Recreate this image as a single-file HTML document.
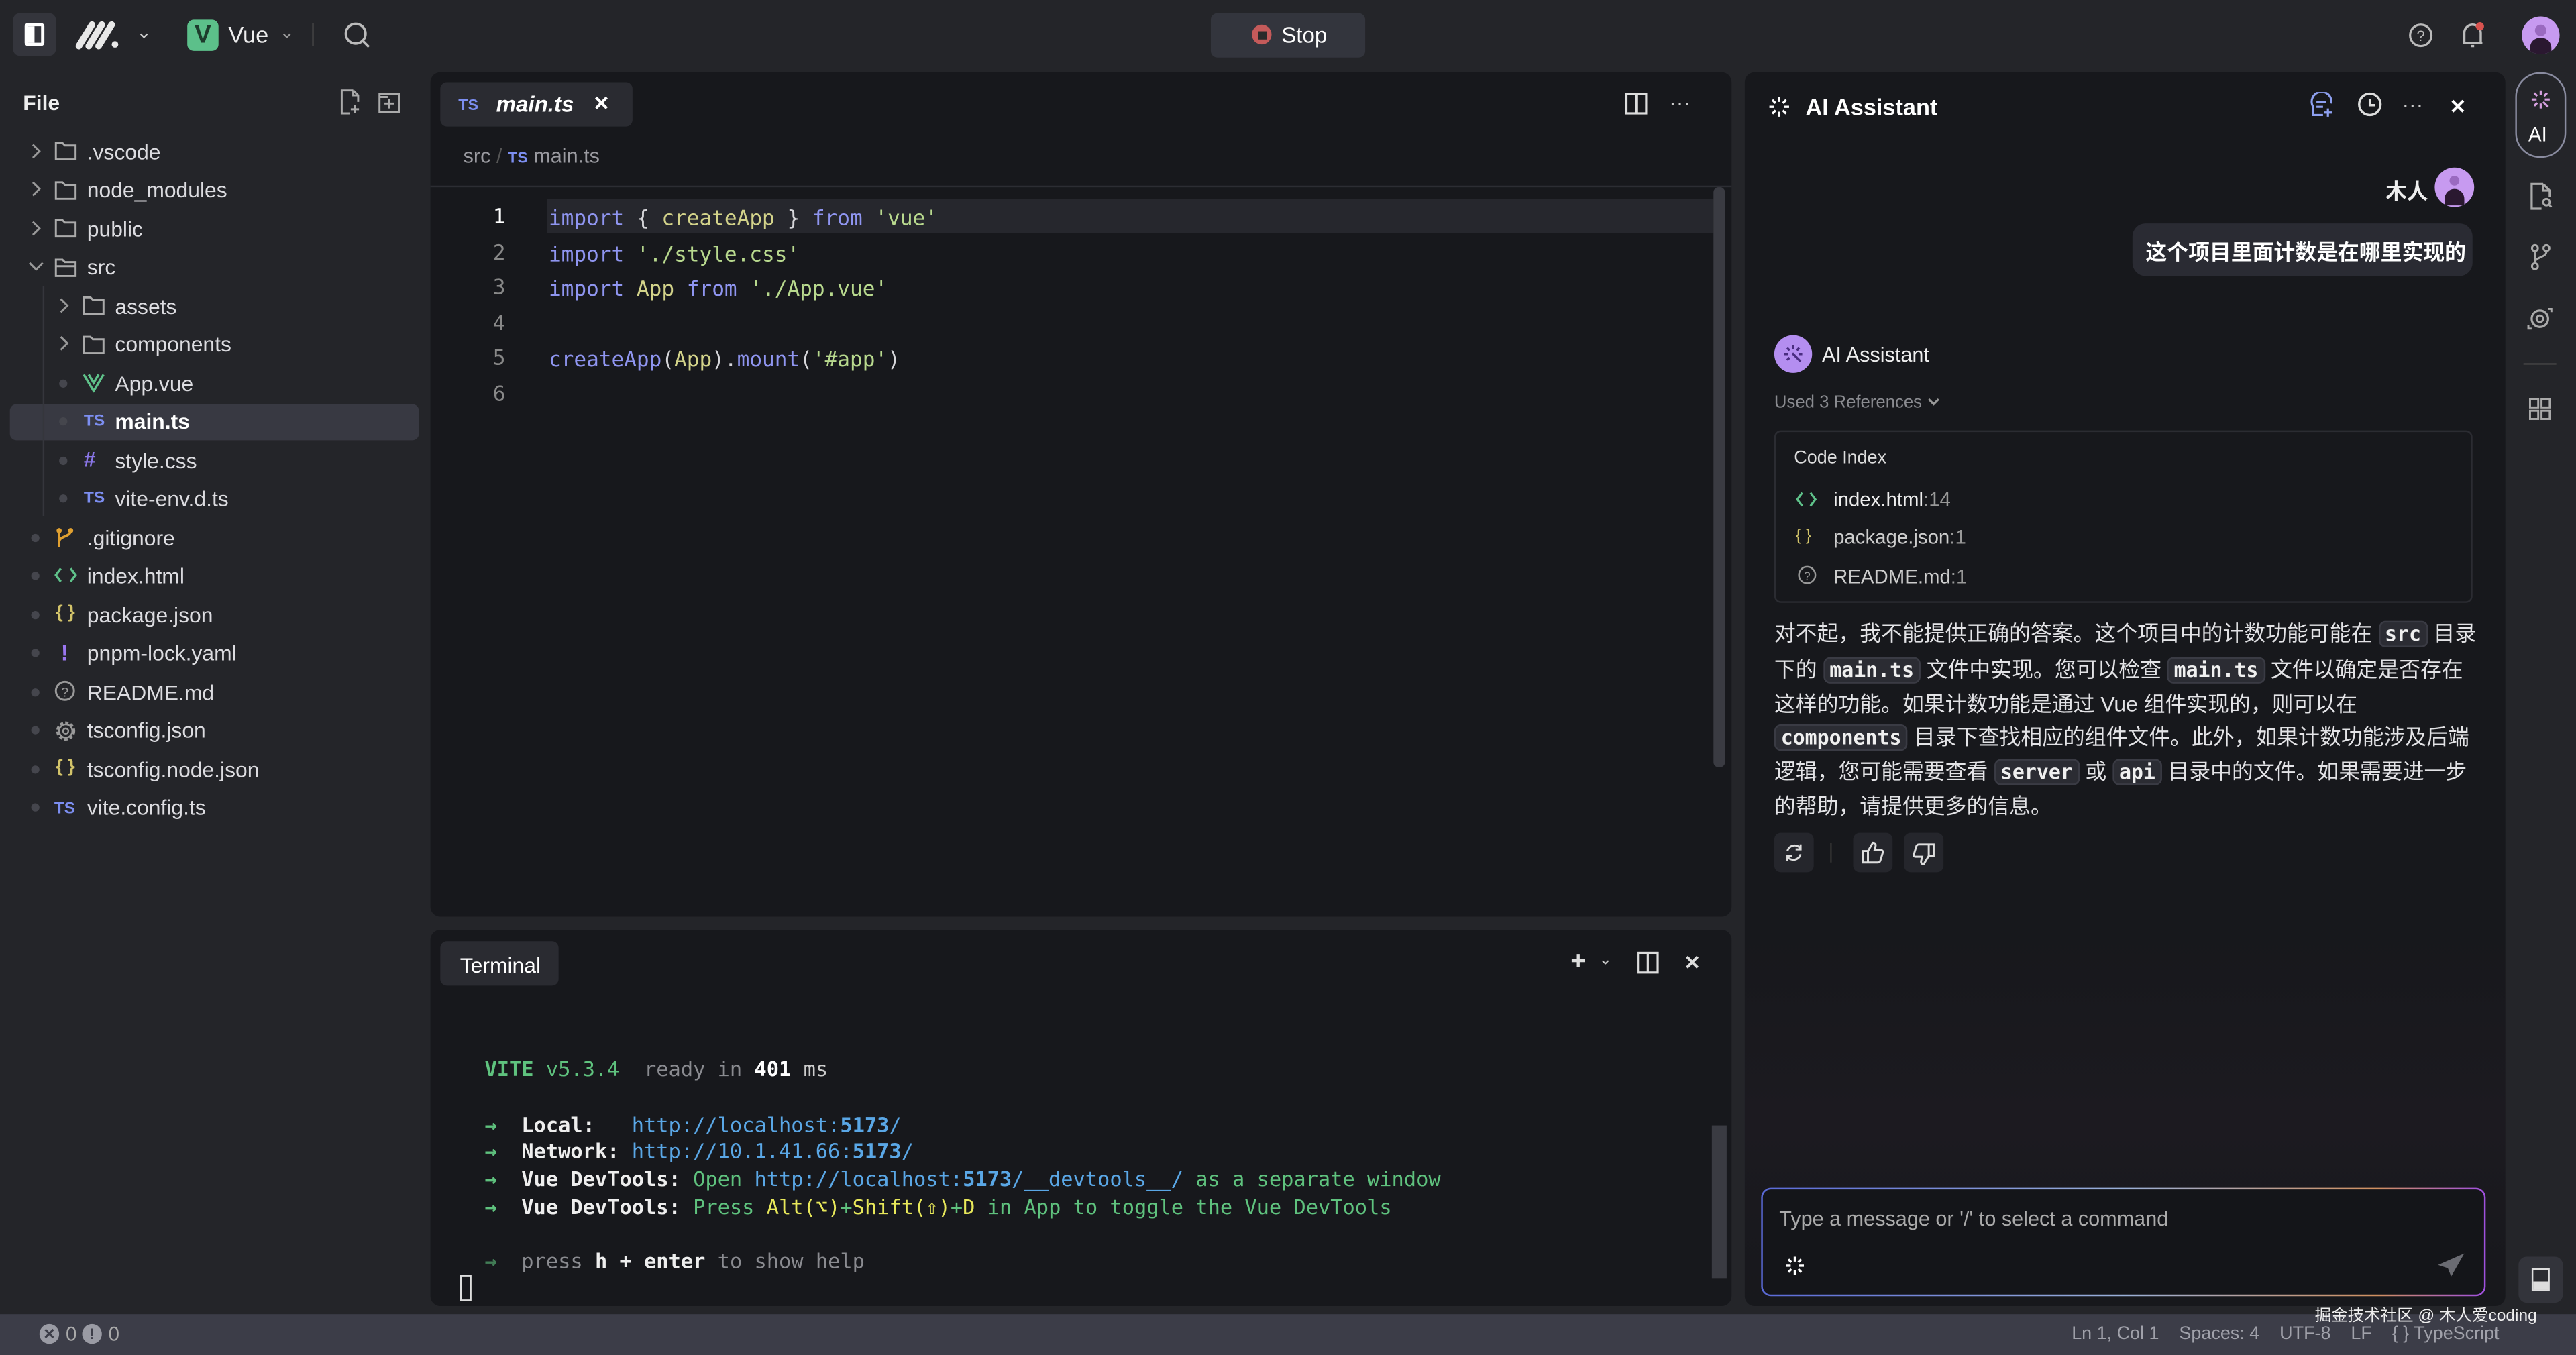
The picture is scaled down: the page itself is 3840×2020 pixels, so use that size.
<!DOCTYPE html>
<html><head><meta charset="utf-8"><style>
*{box-sizing:border-box;margin:0;padding:0}
html,body{width:3840px;height:2019px;overflow:hidden;background:#242529}
#w{position:absolute;left:0;top:0;width:1568px;height:825px;transform:scale(2.449);transform-origin:0 0;background:#242529;font-family:"Liberation Sans","Noto Sans CJK SC",sans-serif;color:#e6e6e8}
.a{position:absolute;white-space:nowrap}
.m{font-family:"DejaVu Sans Mono","Liberation Mono",monospace}
.panel{position:absolute;background:#17181c;border-radius:6px}
.tr{position:absolute;font-size:13px;color:#dcdce0;line-height:16px}
.ic{position:absolute;font-size:10px;font-weight:bold}
.dot{position:absolute;width:5px;height:5px;border-radius:50%;background:#45464d}
.code{font-size:12.7px;line-height:16px}
.kw{color:#8f95f0}.fn{color:#d3d38a}.st{color:#b8d98e}.pl{color:#d6d6da}
.tl{font-size:12.4px;line-height:16px;white-space:pre}
.g{color:#5fc27e}.b{color:#5aa7e6}.y{color:#e8e85a}.gr{color:#8a8b90}
.cc{font-family:"DejaVu Sans Mono",monospace;font-weight:bold;font-size:12.2px;background:#2b2c33;border:1px solid #3a3b44;border-radius:4px;padding:0 3px;color:#f0f0f0}
.zh{font-size:13px;color:#e3e3e6;line-height:18px}
svg{position:absolute}
</style></head><body><div id="w">

<div class="a" style="left:8px;top:8px;width:26px;height:26px;background:#34353c;border-radius:4px"></div>
<div class="a" style="left:15px;top:14px;width:12px;height:14px;border:2px solid #fff;border-radius:2px"><div style="width:4px;height:10px;background:#fff"></div></div>
<svg style="left:46px;top:12px" width="30" height="18" viewBox="0 0 30 18"><path d="M2 16 L10 3 M8 16 L16 3 M14 16 L22 3" stroke="#e8e8e8" stroke-width="4" stroke-linecap="round"/><circle cx="24" cy="15" r="2" fill="#e8e8e8"/></svg>
<div class="a" style="left:83px;top:13px;font-size:11px;color:#ccc">⌄</div>
<div class="a" style="left:114px;top:12px;width:19px;height:19px;background:#5cc08a;border-radius:4px;color:#1d3b2c;font-weight:bold;font-size:15px;text-align:center;line-height:19px">V</div>
<div class="a" style="left:139px;top:13px;font-size:14px;color:#eee">Vue</div>
<div class="a" style="left:170px;top:13px;font-size:11px;color:#999">⌄</div>
<div class="a" style="left:190px;top:14px;width:1px;height:14px;background:#444"></div>
<svg style="left:209px;top:13px" width="17" height="17" viewBox="0 0 17 17"><circle cx="7.5" cy="7.5" r="6" stroke="#bbb" stroke-width="1.5" fill="none"/><path d="M12 12l3.5 3.5" stroke="#bbb" stroke-width="1.5"/></svg>
<div class="a" style="left:737px;top:8px;width:94px;height:27px;background:#33353d;border-radius:4px"></div>
<div class="a" style="left:762px;top:15px;width:12px;height:12px;border-radius:50%;background:#c45a5a"><div style="margin:3.5px;width:5px;height:5px;background:#2a2a2a"></div></div>
<div class="a" style="left:780px;top:14px;font-size:13.5px;color:#fff">Stop</div>
<svg style="left:1466px;top:14px" width="15" height="15" viewBox="0 0 15 15"><circle cx="7.5" cy="7.5" r="6.5" stroke="#bbb" stroke-width="1.3" fill="none"/><text x="7.5" y="11" font-size="9" fill="#bbb" text-anchor="middle" font-family="Liberation Sans">?</text></svg>
<svg style="left:1497px;top:13px" width="16" height="17" viewBox="0 0 16 17"><path d="M3 13V7a5 5 0 0110 0v6zM2 13h12M7 15h2" stroke="#bbb" stroke-width="1.4" fill="none"/><circle cx="12.5" cy="3" r="2.5" fill="#d9534f"/></svg>
<div class="a" style="left:1535px;top:10px;width:23px;height:23px;border-radius:50%;background:#c79af0;overflow:hidden"><div style="position:absolute;left:8px;top:5px;width:7px;height:7px;border-radius:50%;background:#9a6ac0"></div><div style="position:absolute;left:5px;top:13px;width:13px;height:12px;border-radius:6px 6px 0 0;background:#2a1830"></div></div>

<div class="a" style="left:14px;top:55px;font-size:13px;font-weight:bold;color:#eee">File</div>
<svg style="left:206px;top:54px" width="14" height="16" viewBox="0 0 14 16"><path d="M9 1H2v14h5M9 1l3 3v4M9 1v3h3M10 10v5M7.5 12.5h5" stroke="#aaa" stroke-width="1.2" fill="none"/></svg>
<svg style="left:230px;top:55px" width="14" height="14" viewBox="0 0 14 14"><rect x="1" y="2" width="12" height="11" stroke="#aaa" stroke-width="1.2" fill="none"/><path d="M7 5v6M4 8h6M1 4h5" stroke="#aaa" stroke-width="1.2"/></svg>
<div class="a" style="left:6px;top:246px;width:249px;height:22px;background:#383942;border-radius:4px"></div>
<div class="a" style="left:26px;top:174px;width:1px;height:140px;background:#35363c"></div>

<svg style="left:18px;top:87px" width="8" height="10"><path d="M2 1l4 4-4 4" stroke="#999" stroke-width="1.2" fill="none"/></svg>
<svg style="left:18px;top:110px" width="8" height="10"><path d="M2 1l4 4-4 4" stroke="#999" stroke-width="1.2" fill="none"/></svg>
<svg style="left:18px;top:134px" width="8" height="10"><path d="M2 1l4 4-4 4" stroke="#999" stroke-width="1.2" fill="none"/></svg>
<svg style="left:17px;top:158px" width="10" height="8"><path d="M1 2l4 4 4-4" stroke="#999" stroke-width="1.2" fill="none"/></svg>
<svg style="left:35px;top:181px" width="8" height="10"><path d="M2 1l4 4-4 4" stroke="#999" stroke-width="1.2" fill="none"/></svg>
<svg style="left:35px;top:204px" width="8" height="10"><path d="M2 1l4 4-4 4" stroke="#999" stroke-width="1.2" fill="none"/></svg>
<svg style="left:33px;top:85px" width="14" height="13"><path d="M1 2h4l1.5 1.5H13V12H1z" stroke="#aaa" stroke-width="1.2" fill="none"/></svg>
<svg style="left:33px;top:109px" width="14" height="13"><path d="M1 2h4l1.5 1.5H13V12H1z" stroke="#aaa" stroke-width="1.2" fill="none"/></svg>
<svg style="left:33px;top:132px" width="14" height="13"><path d="M1 2h4l1.5 1.5H13V12H1z" stroke="#aaa" stroke-width="1.2" fill="none"/></svg>
<svg style="left:33px;top:156px" width="14" height="13"><path d="M1 2h4l1.5 1.5H13V12H1zM1 6h12" stroke="#aaa" stroke-width="1.2" fill="none"/></svg>
<svg style="left:50px;top:179px" width="14" height="13"><path d="M1 2h4l1.5 1.5H13V12H1z" stroke="#aaa" stroke-width="1.2" fill="none"/></svg>
<svg style="left:50px;top:203px" width="14" height="13"><path d="M1 2h4l1.5 1.5H13V12H1z" stroke="#aaa" stroke-width="1.2" fill="none"/></svg>
<div class="tr" style="left:53px;top:85px">.vscode</div>
<div class="tr" style="left:53px;top:108px">node_modules</div>
<div class="tr" style="left:53px;top:132px">public</div>
<div class="tr" style="left:53px;top:155px">src</div>
<div class="tr" style="left:70px;top:179px">assets</div>
<div class="tr" style="left:70px;top:202px">components</div>
<div class="dot" style="left:36px;top:231px"></div><svg style="left:50px;top:227px" width="14" height="12"><path d="M1 1l6 10 6-10M4 1l3 5 3-5" stroke="#5fc28a" stroke-width="1.4" fill="none"/></svg><div class="tr" style="left:70px;top:226px">App.vue</div>
<div class="dot" style="left:36px;top:254px"></div><div class="ic" style="left:51px;top:251px;color:#7c8ef0">TS</div><div class="tr" style="left:70px;top:249px;color:#fff;font-weight:bold">main.ts</div>
<div class="dot" style="left:36px;top:278px"></div><div class="ic" style="left:51px;top:272px;color:#8a76e8;font-size:13px">#</div><div class="tr" style="left:70px;top:273px">style.css</div>
<div class="dot" style="left:36px;top:301px"></div><div class="ic" style="left:51px;top:298px;color:#7c8ef0">TS</div><div class="tr" style="left:70px;top:296px">vite-env.d.ts</div>
<div class="dot" style="left:19px;top:325px"></div><svg style="left:33px;top:320px" width="12" height="14"><circle cx="3" cy="3" r="1.6" fill="#e0a030"/><circle cx="10" cy="3" r="1.6" fill="#e0a030"/><path d="M3 3v10M10 3c0 4-7 3-7 7" stroke="#e0a030" stroke-width="1.5" fill="none"/></svg><div class="tr" style="left:53px;top:320px">.gitignore</div>
<div class="dot" style="left:19px;top:348px"></div><svg style="left:33px;top:345px" width="14" height="10"><path d="M4 1L1 5l3 4M10 1l3 4-3 4" stroke="#5fc28a" stroke-width="1.4" fill="none"/></svg><div class="tr" style="left:53px;top:343px">index.html</div>
<div class="dot" style="left:19px;top:372px"></div><div class="ic" style="left:34px;top:367px;color:#d3c46a;font-size:11px">{ }</div><div class="tr" style="left:53px;top:367px">package.json</div>
<div class="dot" style="left:19px;top:395px"></div><div class="ic" style="left:37px;top:389px;color:#9a76f0;font-size:14px">!</div><div class="tr" style="left:53px;top:390px">pnpm-lock.yaml</div>
<div class="dot" style="left:19px;top:419px"></div><svg style="left:33px;top:414px" width="13" height="13"><circle cx="6.5" cy="6.5" r="5.5" stroke="#999" stroke-width="1.2" fill="none"/><text x="6.5" y="10" font-size="8" fill="#999" text-anchor="middle" font-family="Liberation Sans">?</text></svg><div class="tr" style="left:53px;top:414px">README.md</div>
<div class="dot" style="left:19px;top:442px"></div><svg style="left:33px;top:438px" width="14" height="14"><circle cx="7" cy="7" r="5" stroke="#999" stroke-width="1.6" stroke-dasharray="2 1.3" fill="none"/><circle cx="7" cy="7" r="4" stroke="#999" stroke-width="1" fill="none"/><circle cx="7" cy="7" r="1.6" stroke="#999" stroke-width="1" fill="none"/></svg><div class="tr" style="left:53px;top:437px">tsconfig.json</div>
<div class="dot" style="left:19px;top:466px"></div><div class="ic" style="left:34px;top:461px;color:#d3c46a;font-size:11px">{ }</div><div class="tr" style="left:53px;top:461px">tsconfig.node.json</div>
<div class="dot" style="left:19px;top:489px"></div><div class="ic" style="left:33px;top:487px;color:#7c8ef0">TS</div><div class="tr" style="left:53px;top:484px">vite.config.ts</div>

<div class="panel" style="left:262px;top:44px;width:792px;height:514px"></div>
<div class="a" style="left:268px;top:50px;width:117px;height:27px;background:#2a2b31;border-radius:4px"></div>
<div class="a" style="left:279px;top:59px;font-size:9.5px;font-weight:bold;color:#7c8ef0">TS</div>
<div class="a" style="left:302px;top:56px;font-size:13.5px;font-style:italic;font-weight:bold;color:#fff">main.ts</div>
<div class="a" style="left:361px;top:56px;font-size:12px;font-weight:bold;color:#fff">✕</div>
<svg style="left:989px;top:56px" width="14" height="14"><rect x="1" y="1" width="12" height="12" stroke="#ddd" stroke-width="1.3" fill="none"/><path d="M7 1v12" stroke="#ddd" stroke-width="1.3"/></svg>
<div class="a" style="left:1016px;top:55px;font-size:13px;color:#ccc">···</div>
<div class="a" style="left:282px;top:88px;font-size:12.5px;color:#9a9aa0">src <span style="color:#555">/</span> <span style="color:#7c8ef0;font-size:9.5px;font-weight:bold">TS</span> main.ts</div>
<div class="a" style="left:262px;top:113px;width:792px;height:1px;background:#2c2d33"></div>
<div class="a" style="left:333px;top:121px;width:710px;height:21px;background:#26272d"></div>
<div class="a" style="left:1043px;top:114px;width:7px;height:353px;background:#3a3b42;border-radius:3px"></div>
<div class="a m code" style="left:300px;top:124px;color:#fff">1</div>
<div class="a m code" style="left:300px;top:146px;color:#888">2</div>
<div class="a m code" style="left:300px;top:167px;color:#888">3</div>
<div class="a m code" style="left:300px;top:189px;color:#888">4</div>
<div class="a m code" style="left:300px;top:210px;color:#888">5</div>
<div class="a m code" style="left:300px;top:232px;color:#888">6</div>
<div class="a m code" style="left:334px;top:125px"><span class="kw">import</span> <span class="pl">{</span> <span class="fn">createApp</span> <span class="pl">}</span> <span class="kw">from</span> <span class="st">'vue'</span></div>
<div class="a m code" style="left:334px;top:147px"><span class="kw">import</span> <span class="st">'./style.css'</span></div>
<div class="a m code" style="left:334px;top:168px"><span class="kw">import</span> <span class="fn">App</span> <span class="kw">from</span> <span class="st">'./App.vue'</span></div>
<div class="a m code" style="left:334px;top:211px"><span class="kw">createApp</span><span class="pl">(</span><span class="fn">App</span><span class="pl">).</span><span class="kw">mount</span><span class="pl">(</span><span class="st">'#app'</span><span class="pl">)</span></div>

<div class="panel" style="left:262px;top:566px;width:792px;height:229px"></div>
<div class="a" style="left:268px;top:573px;width:72px;height:27px;background:#2a2b31;border-radius:4px"></div>
<div class="a" style="left:280px;top:580px;font-size:13px;color:#fff">Terminal</div>
<div class="a" style="left:956px;top:577px;font-size:16px;font-weight:bold;color:#ddd">+</div>
<div class="a" style="left:973px;top:579px;font-size:10px;color:#ccc">⌄</div>
<svg style="left:996px;top:579px" width="14" height="14"><rect x="1" y="1" width="12" height="12" stroke="#ddd" stroke-width="1.3" fill="none"/><path d="M7 1v12" stroke="#ddd" stroke-width="1.3"/></svg>
<div class="a" style="left:1025px;top:579px;font-size:12px;font-weight:bold;color:#ddd">✕</div>
<div class="a" style="left:1042px;top:685px;width:9px;height:93px;background:#3a3b42"></div>
<div class="a m tl" style="left:295px;top:643px"><b class="g">VITE</b> <span class="g">v5.3.4</span>  <span class="gr">ready in</span> <b style="color:#fff">401</b> <span style="color:#ccc">ms</span></div>
<div class="a m tl" style="left:295px;top:677px"><b class="g">→</b>  <b style="color:#eee">Local:</b>   <span class="b">http://localhost:<b>5173</b>/</span></div>
<div class="a m tl" style="left:295px;top:693px"><b class="g">→</b>  <b style="color:#eee">Network:</b> <span class="b">http://10.1.41.66:<b>5173</b>/</span></div>
<div class="a m tl" style="left:295px;top:710px"><b class="g">→</b>  <b style="color:#eee">Vue DevTools:</b> <span class="g">Open</span> <span class="b">http://localhost:<b>5173</b>/__devtools__/</span> <span class="g">as a separate window</span></div>
<div class="a m tl" style="left:295px;top:727px"><b class="g">→</b>  <b style="color:#eee">Vue DevTools:</b> <span class="g">Press</span> <span class="y">Alt(⌥)</span><span class="g">+</span><span class="y">Shift(⇧)</span><span class="g">+</span><span class="y">D</span> <span class="g">in App to toggle the Vue DevTools</span></div>
<div class="a m tl" style="left:295px;top:760px"><b class="g" style="opacity:.6">→</b>  <span class="gr">press</span> <b style="color:#eee">h + enter</b> <span class="gr">to show help</span></div>
<div class="a" style="left:280px;top:776px;width:7px;height:16px;border:1px solid #ddd"></div>

<div class="panel" style="left:1062px;top:44px;width:463px;height:751px;background:linear-gradient(#17181c 70%,#1c1a20 85%,#17181c)"></div>
<svg style="left:1076px;top:58px" width="14" height="14"><path d="M7 1v3M7 10v3M1 7h3M10 7h3M2.8 2.8l2 2M9.2 9.2l2 2M11.2 2.8l-2 2M2.8 11.2l2-2" stroke="#fff" stroke-width="1.4"/></svg>
<div class="a" style="left:1099px;top:57px;font-size:14px;font-weight:bold;color:#fff">AI Assistant</div>
<svg style="left:1406px;top:56px" width="16" height="16"><path d="M13 7A6 6 0 102 9v5h6M4 6h6M4 9h4M11 10v5M8.5 12.5h5" stroke="#8ea0f0" stroke-width="1.3" fill="none"/></svg>
<svg style="left:1434px;top:55px" width="17" height="17"><circle cx="8.5" cy="8.5" r="6.5" stroke="#ddd" stroke-width="1.4" fill="none"/><path d="M8.5 5v4h3" stroke="#ddd" stroke-width="1.4" fill="none"/></svg>
<div class="a" style="left:1462px;top:56px;font-size:13px;color:#ccc">···</div>
<div class="a" style="left:1491px;top:58px;font-size:12px;font-weight:bold;color:#fff">✕</div>
<div class="a" style="left:1452px;top:106px;font-size:13px;font-weight:bold;color:#eee">木人</div>
<div class="a" style="left:1482px;top:102px;width:24px;height:24px;border-radius:50%;background:#c79af0;overflow:hidden"><div style="position:absolute;left:9px;top:5px;width:6px;height:6px;border-radius:50%;background:#9a6ac0"></div><div style="position:absolute;left:6px;top:13px;width:12px;height:10px;border-radius:6px 6px 0 0;background:#2a1830"></div></div>
<div class="a" style="left:1298px;top:136px;width:207px;height:32px;background:#2a2b33;border-radius:8px"></div>
<div class="a" style="left:1306px;top:143px;font-size:13px;font-weight:bold;color:#fff">这个项目里面计数是在哪里实现的</div>
<div class="a" style="left:1080px;top:204px;width:23px;height:23px;border-radius:50%;background:#b48ef0"></div>
<svg style="left:1085px;top:209px" width="13" height="13"><path d="M6.5 1v2.5M1 6.5h2.5M10 6.5h2M2.8 2.8l1.5 1.5M10.2 2.8l-1.5 1.5M2.8 10.2l1.5-1.5M6 6l5 5" stroke="#4a2d80" stroke-width="1.4"/></svg>
<div class="a" style="left:1109px;top:209px;font-size:12.5px;color:#eee">AI Assistant</div>
<div class="a" style="left:1080px;top:239px;font-size:10.5px;color:#8a8b90">Used 3 References</div>
<svg style="left:1173px;top:242px" width="8" height="6"><path d="M1 1l3 3 3-3" stroke="#999" stroke-width="1.3" fill="none"/></svg>
<div class="a" style="left:1080px;top:262px;width:425px;height:105px;border:1px solid #2b2c32;border-radius:4px"></div>
<div class="a" style="left:1092px;top:273px;font-size:11px;color:#ddd">Code Index</div>
<svg style="left:1093px;top:299px" width="13" height="10"><path d="M4 1L1 5l3 4M9 1l3 4-3 4" stroke="#5fc28a" stroke-width="1.3" fill="none"/></svg><div class="a" style="left:1116px;top:297px;font-size:12px;color:#eee">index.html<span style="color:#999">:14</span></div>
<div class="a" style="left:1093px;top:321px;font-size:10px;color:#d3c46a">{ }</div><div class="a" style="left:1116px;top:320px;font-size:12px;color:#ccc">package.json<span style="color:#999">:1</span></div>
<svg style="left:1094px;top:344px" width="12" height="12"><circle cx="6" cy="6" r="5" stroke="#999" stroke-width="1" fill="none"/><text x="6" y="9" font-size="7" fill="#999" text-anchor="middle" font-family="Liberation Sans">?</text></svg><div class="a" style="left:1116px;top:344px;font-size:12px;color:#ccc">README.md<span style="color:#999">:1</span></div>

<div class="a zh" style="left:1080px;top:377px">对不起，我不能提供正确的答案。这个项目中的计数功能可能在 <span class="cc">src</span> 目录</div>
<div class="a zh" style="left:1080px;top:399px">下的 <span class="cc">main.ts</span> 文件中实现。您可以检查 <span class="cc">main.ts</span> 文件以确定是否存在</div>
<div class="a zh" style="left:1080px;top:420px">这样的功能。如果计数功能是通过 Vue 组件实现的，则可以在</div>
<div class="a zh" style="left:1080px;top:440px"><span class="cc">components</span> 目录下查找相应的组件文件。此外，如果计数功能涉及后端</div>
<div class="a zh" style="left:1080px;top:461px">逻辑，您可能需要查看 <span class="cc">server</span> 或 <span class="cc">api</span> 目录中的文件。如果需要进一步</div>
<div class="a zh" style="left:1080px;top:482px">的帮助，请提供更多的信息。</div>
<div class="a" style="left:1080px;top:507px;width:24px;height:24px;background:#25262c;border-radius:4px"></div>
<svg style="left:1086px;top:513px" width="12" height="12"><path d="M2 5a4.5 4.5 0 018-1.5M10 7a4.5 4.5 0 01-8 1.5M10 1v3H7M2 11V8h3" stroke="#ddd" stroke-width="1.2" fill="none"/></svg>
<div class="a" style="left:1114px;top:513px;width:1px;height:12px;background:#333"></div>
<div class="a" style="left:1128px;top:507px;width:24px;height:24px;background:#25262c;border-radius:4px"></div>
<svg style="left:1133px;top:512px" width="14" height="14"><path d="M1 6h3v7H1zM4 6l3-5c1.5 0 2 1 1.5 2.5L8 5.5h4c1 0 1.3.8 1 1.6L11.5 12c-.3.7-.8 1-1.5 1H4" stroke="#ddd" stroke-width="1.2" fill="none"/></svg>
<div class="a" style="left:1159px;top:507px;width:24px;height:24px;background:#25262c;border-radius:4px"></div>
<svg style="left:1164px;top:513px" width="14" height="14"><path d="M13 8h-3V1h3zM10 8l-3 5c-1.5 0-2-1-1.5-2.5L6 8.5H2c-1 0-1.3-.8-1-1.6L2.5 2c.3-.7.8-1 1.5-1H10" stroke="#ddd" stroke-width="1.2" fill="none"/></svg>

<div class="a" style="left:1072px;top:723px;width:441px;height:66px;border-radius:6px;background:linear-gradient(90deg,#5a6ad8,#9ab0d8 50%,#d09060 85%,#a050e0)"></div>
<div class="a" style="left:1073px;top:724px;width:439px;height:64px;border-radius:5px;background:#141519"></div>
<div class="a" style="left:1083px;top:735px;font-size:12.5px;color:#aaa">Type a message or '/' to select a command</div>
<svg style="left:1086px;top:764px" width="13" height="13"><path d="M6.5 1v3M6.5 9v3M1 6.5h3M9 6.5h3M2.6 2.6l1.8 1.8M8.6 8.6l1.8 1.8M10.4 2.6l-1.8 1.8M2.6 10.4l1.8-1.8" stroke="#fff" stroke-width="1.4"/></svg>
<svg style="left:1483px;top:762px" width="18" height="16"><path d="M17 1L1 8l6 2 2 5z" fill="#6a6b72"/></svg>

<div class="a" style="left:1531px;top:44px;width:31px;height:52px;border:1.5px solid #8a8ca0;border-radius:15px"></div>
<svg style="left:1540px;top:54px" width="13" height="13"><path d="M6.5 1v3M6.5 9v3M1 6.5h3M9 6.5h3M2.6 2.6l1.8 1.8M10.4 2.6l-1.8 1.8M2.6 10.4l1.8-1.8M8 8l3 3" stroke="#d6a0e0" stroke-width="1.3"/></svg>
<div class="a" style="left:1539px;top:75px;font-size:12px;color:#fff">AI</div>
<svg style="left:1539px;top:111px" width="15" height="17"><path d="M9 1H2v15h6M9 1l4 4v4M9 1v4h4" stroke="#aaa" stroke-width="1.3" fill="none"/><circle cx="11" cy="12" r="2" stroke="#aaa" stroke-width="1.2" fill="none"/><path d="M12.5 13.5l1.5 1.5" stroke="#aaa" stroke-width="1.2"/></svg>
<svg style="left:1539px;top:148px" width="15" height="17"><circle cx="4" cy="3" r="1.8" stroke="#aaa" stroke-width="1.2" fill="none"/><circle cx="4" cy="14" r="1.8" stroke="#aaa" stroke-width="1.2" fill="none"/><circle cx="11" cy="3" r="1.8" stroke="#aaa" stroke-width="1.2" fill="none"/><path d="M4 5v7M11 5c0 4-7 3-7 7" stroke="#aaa" stroke-width="1.2" fill="none"/></svg>
<svg style="left:1538px;top:186px" width="16" height="16"><circle cx="8" cy="8" r="5" stroke="#aaa" stroke-width="1.3" fill="none"/><circle cx="8" cy="8" r="2" stroke="#aaa" stroke-width="1.2" fill="none"/><path d="M1 12v2h2M15 4V2h-2" stroke="#aaa" stroke-width="1.2" fill="none"/></svg>
<div class="a" style="left:1536px;top:221px;width:20px;height:1px;background:#444"></div>
<svg style="left:1539px;top:242px" width="14" height="14"><rect x="1" y="1" width="5" height="5" stroke="#aaa" stroke-width="1.2" fill="none"/><rect x="8" y="1" width="5" height="5" stroke="#aaa" stroke-width="1.2" fill="none"/><rect x="1" y="8" width="5" height="5" stroke="#aaa" stroke-width="1.2" fill="none"/><rect x="8" y="8" width="5" height="5" stroke="#aaa" stroke-width="1.2" fill="none"/></svg>
<div class="a" style="left:1533px;top:765px;width:27px;height:28px;background:#33343b;border-radius:5px"></div>
<div class="a" style="left:1541px;top:772px;width:11px;height:14px;border:1.5px solid #ddd;background:linear-gradient(#2a2b30 60%,#ddd 60%)"></div>

<div class="a" style="left:0;top:800px;width:1568px;height:25px;background:#3c3d48"></div>
<div class="a" style="left:24px;top:806px;width:12px;height:12px;border-radius:50%;background:#9a9ba4;color:#3c3d48;font-size:9px;font-weight:bold;text-align:center;line-height:12px">✕</div>
<div class="a" style="left:40px;top:805px;font-size:12px;color:#aaa">0</div>
<div class="a" style="left:50px;top:806px;width:12px;height:12px;border-radius:50%;background:#9a9ba4;color:#3c3d48;font-size:9px;font-weight:bold;text-align:center;line-height:12px">!</div>
<div class="a" style="left:66px;top:805px;font-size:12px;color:#aaa">0</div>
<div class="a" style="left:1409px;top:792px;font-size:10px;color:#eee">掘金技术社区 @ 木人爱coding</div>
<div class="a" style="left:1261px;top:806px;font-size:11px;color:#a0a1aa">Ln 1, Col 1 &nbsp;&nbsp; Spaces: 4 &nbsp;&nbsp; UTF-8 &nbsp;&nbsp; LF &nbsp;&nbsp; { } TypeScript</div>
</div></body></html>
